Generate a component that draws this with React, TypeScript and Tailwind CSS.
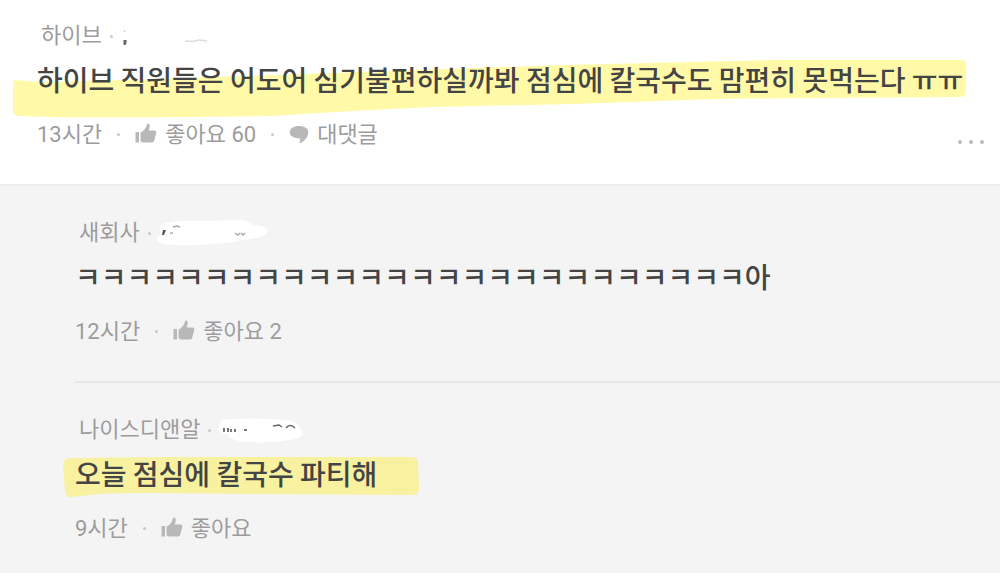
import React from "react";

function ThumbIcon() {
  return (
    <svg viewBox="0 0 22 22" className="h-[22px] w-[22px] shrink-0 fill-[#b8b8b8]" aria-hidden="true">
      <path d="M0.500 9h3.500v10.500H0.500zM5.500 9.800c2.800-1.300 5.500-4.600 6.300-7.800.3-1.200 1-1.600 1.800-1.300 1.500.6 1.500 3 .2 6.900h5.800c1.300 0 1.900 1 1.600 2.300l-1.900 7.500c-.4 1.400-1.200 2.100-2.600 2.100H9c-1.400 0-2.500-.4-3.500-1.200z" />
    </svg>
  );
}

function BubbleIcon() {
  return (
    <svg viewBox="0 0 20 20" className="h-5 w-5 shrink-0 fill-[#b8b8b8]" aria-hidden="true">
      <path d="M10 2c5.400 0 9.300 2.400 9.300 6 0 4.600-3.300 9-8 11-.8.300-1.200-.2-.8-.9.700-1.300.9-2.700.7-3.700C5 14.400.7 12 .7 8.200.700 4.500 4.600 2 10 2z" />
    </svg>
  );
}

function Dot() {
  return <span className="h-[3px] w-[3px] shrink-0 rounded-full bg-[#c8c8c8]" aria-hidden="true" />;
}

type CommentProps = {
  company: string;
  time: string;
  likes?: number;
  text: string;
  name: React.ReactNode;
  highlight?: React.ReactNode;
  canReply?: boolean;
};

function Comment({ company, time, likes, text, name, highlight, canReply }: CommentProps) {
  return (
    <article>
      <header className="flex h-8 items-center gap-2 pl-1 text-[22px] leading-8 text-[#9c9c9c]">
        <span>{company}</span>
        <Dot />
        {name}
      </header>
      <div className="relative mt-[7px]">
        {highlight}
        <p className="relative whitespace-nowrap font-['Noto_Sans_CJK_KR',sans-serif] text-[28px] font-medium leading-10 text-[#444]">
          {text}
        </p>
      </div>
      <footer className="mt-[17px] flex h-9 items-center text-[22px] text-[#9c9c9c]">
        <time>{time}</time>
        <span className="mx-[15px] flex"><Dot /></span>
        <button type="button" className="flex items-center gap-2">
          <ThumbIcon />
          <span>좋아요{likes !== undefined ? ` ${likes}` : ""}</span>
        </button>
        {canReply && (
          <>
            <span className="mx-[15px] flex"><Dot /></span>
            <button type="button" className="flex items-center gap-2">
              <BubbleIcon />
              <span>대댓글</span>
            </button>
          </>
        )}
      </footer>
    </article>
  );
}

export default function App() {
  return (
    <main className="min-h-screen overflow-x-hidden bg-[#f4f4f4] font-['Roboto','Noto_Sans_CJK_KR',sans-serif]">
      <section className="relative border-b-2 border-[#ededed] bg-white pb-8 pl-[37px] pt-5">
        <Comment
          company="하이브"
          time="13시간"
          likes={60}
          canReply
          text="하이브 직원들은 어도어 심기불편하실까봐 점심에 칼국수도 맘편히 못먹는다 ㅠㅠ"
          name={
            <svg viewBox="0 0 96 24" className="h-6 w-24" aria-hidden="true">
              <path d="M2.500 6h2v2h-2z" fill="#ddd" />
              <path d="M2.500 16h3v3l-1 2h-2z" fill="#666" />
              <path d="M64 17l8 .500 6-1.500 8 1" fill="none" stroke="#ddd" strokeWidth="1.500" />
            </svg>
          }
          highlight={
            <svg viewBox="0 0 960 64" className="absolute -left-6 -top-0.5 h-16 w-[960px] max-w-none" aria-hidden="true">
              <path
                d="M2 23Q0 23 0 27V54Q0 59 6 59L40 60Q90 61 260 59Q330 54 420 50L560 47L700 42L945 40Q953 40 953 35V8Q954 3 948 3L760 3Q640 6 550 8L320 16L110 23Q50 25 24 25Z"
                fill="#fff9a8"
              />
            </svg>
          }
        />
        <button
          type="button"
          aria-label="더보기"
          className="absolute bottom-9 right-4 flex gap-[7px] py-1"
        >
          <span className="h-1 w-1 rounded-full bg-[#bbb]" />
          <span className="h-1 w-1 rounded-full bg-[#bbb]" />
          <span className="h-1 w-1 rounded-full bg-[#bbb]" />
        </button>
      </section>

      <section className="pl-[75px]">
        <div className="border-b-2 border-[#e6e6e6] pb-8 pt-[31px]">
          <Comment
            company="새회사"
            time="12시간"
            likes={2}
            text="ㅋㅋㅋㅋㅋㅋㅋㅋㅋㅋㅋㅋㅋㅋㅋㅋㅋㅋㅋㅋㅋㅋㅋㅋㅋㅋ아"
            name={
              <svg viewBox="0 0 114 28" className="-ml-1 h-7 w-[114px]" aria-hidden="true">
                <path d="M8 5Q20 1 42 2L88 1Q96 3 98 6Q112 7 113 13Q110 18 101 19L84 22Q60 27 14 26Q3 25 2 20Q1 17 7 16Q2 9 8 5Z" fill="#fff" />
                <path d="M8 11h3l-2 5H7z" fill="#555" />
                <path d="M15 14h3M18 8l4-1 3 1M80 14l3 2 2-2M86 14l2 2 2-2" fill="none" stroke="#aaa" strokeWidth="1.500" />
              </svg>
            }
          />
        </div>
        <div className="pt-[31px]">
          <Comment
            company="나이스디앤알"
            time="9시간"
            text="오늘 점심에 칼국수 파티해"
            name={
              <svg viewBox="0 0 94 28" className="-ml-1 h-7 w-[94px]" aria-hidden="true">
                <path d="M6 4Q30 1 72 4Q83 6 85 13Q91 18 84 22Q55 28 30 26Q14 24 13 18Q2 17 4 11Z" fill="#fff" />
                <path d="M9 12v4M13 12v4M16 13v3M20 13v3M29 14h3" fill="none" stroke="#777" strokeWidth="2" />
                <path d="M58 10l6-1 3 2M71 12q4-5 9 0" fill="none" stroke="#666" strokeWidth="1.500" />
              </svg>
            }
            highlight={
              <svg viewBox="0 0 358 44" className="absolute -left-3 top-px h-11 w-[358px]" aria-hidden="true">
                <path d="M6 4L100 3L348 3Q355 3 355 9L356 35Q356 40 350 41L180 40Q60 38 36 40L8 43Q2 43 2 37L0 12Q0 5 6 4Z" fill="#f7f1a0" />
              </svg>
            }
          />
        </div>
      </section>
    </main>
  );
}
